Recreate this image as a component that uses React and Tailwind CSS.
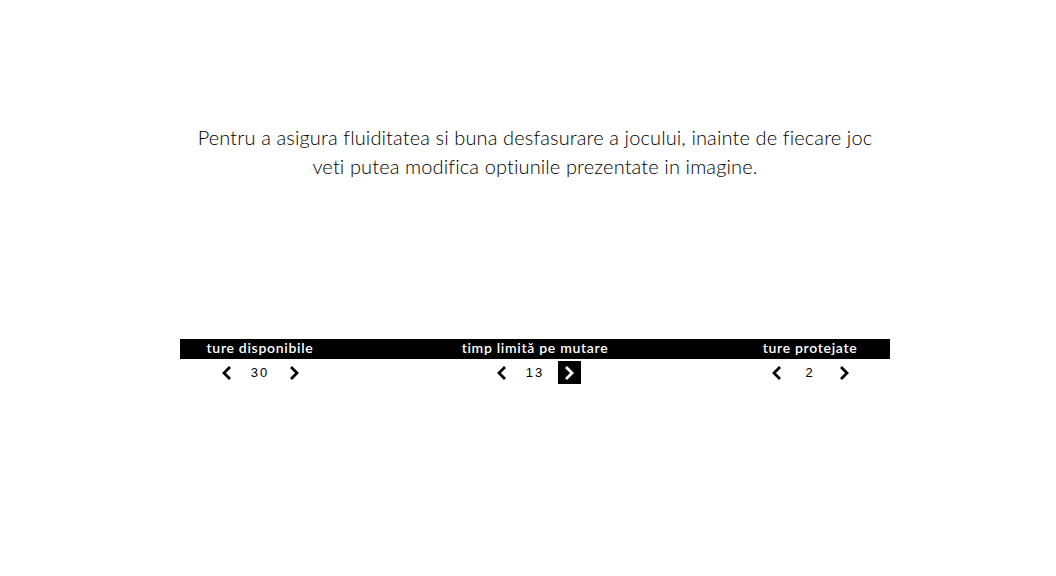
import { useState } from 'react';

const Chevron = ({ dir }) => (
  <svg width="12" height="14" viewBox="0 0 12 14" fill="none">
    <polyline
      points={dir === 'left' ? '9,2 4,7 9,12' : '3,2 8,7 3,12'}
      stroke="currentColor"
      strokeWidth="2.8"
      strokeLinecap="square"
      strokeLinejoin="miter"
    />
  </svg>
);

const options = [
  { label: 'ture disponibile', value: 30 },
  { label: 'timp limită pe mutare', value: 13, active: true },
  { label: 'ture protejate', value: 2 },
];

export default function App() {
  const [values, setValues] = useState(options.map((o) => o.value));

  const change = (i, d) => {
    setValues((v) => v.map((x, j) => (j === i ? Math.max(0, x + d) : x)));
  };

  return (
    <div className="min-h-[576px] w-[1056px] bg-white">
      <div className="ml-[180px] w-[710px] pt-[123px]">
        <p
          className="text-center text-[20px] leading-[29px] font-light tracking-[0.12px] text-black whitespace-nowrap [font-variant-ligatures:none]"
          style={{ fontFamily: 'Lato, "Open Sans", sans-serif' }}
        >
          Pentru a asigura fluiditatea si buna desfasurare a jocului, inainte de fiecare joc
          <br />
          veti putea modifica optiunile prezentate in imagine.
        </p>

        <div className="mt-[158px]">
          <div className="flex h-[20px] items-center justify-between bg-black pb-[3px]">
            {options.map((o) => (
              <div
                key={o.label}
                className="w-[160px] text-center text-[14px] font-semibold leading-[17px] tracking-[0.7px] text-white [font-variant-ligatures:none]"
                style={{ fontFamily: 'Lato, sans-serif' }}
              >
                {o.label}
              </div>
            ))}
          </div>
          <div className="mt-[2px] flex justify-between">
            {options.map((o, i) => (
              <div key={o.label} className="flex w-[160px] items-center justify-center gap-[12px]">
                <button
                  onClick={() => change(i, -1)}
                  className="flex h-[23px] w-[23px] items-center justify-center text-black"
                >
                  <Chevron dir="left" />
                </button>
                <span
                  className="w-[22px] text-center text-[13px] tracking-[2px] text-black"
                  style={{ fontFamily: '"Liberation Sans", sans-serif' }}
                >
                  {values[i]}
                </span>
                <button
                  onClick={() => change(i, 1)}
                  className={
                    o.active
                      ? 'flex h-[23px] w-[23px] items-center justify-center bg-black text-white'
                      : 'flex h-[23px] w-[23px] items-center justify-center text-black'
                  }
                >
                  <Chevron dir="right" />
                </button>
              </div>
            ))}
          </div>
        </div>
      </div>
    </div>
  );
}
